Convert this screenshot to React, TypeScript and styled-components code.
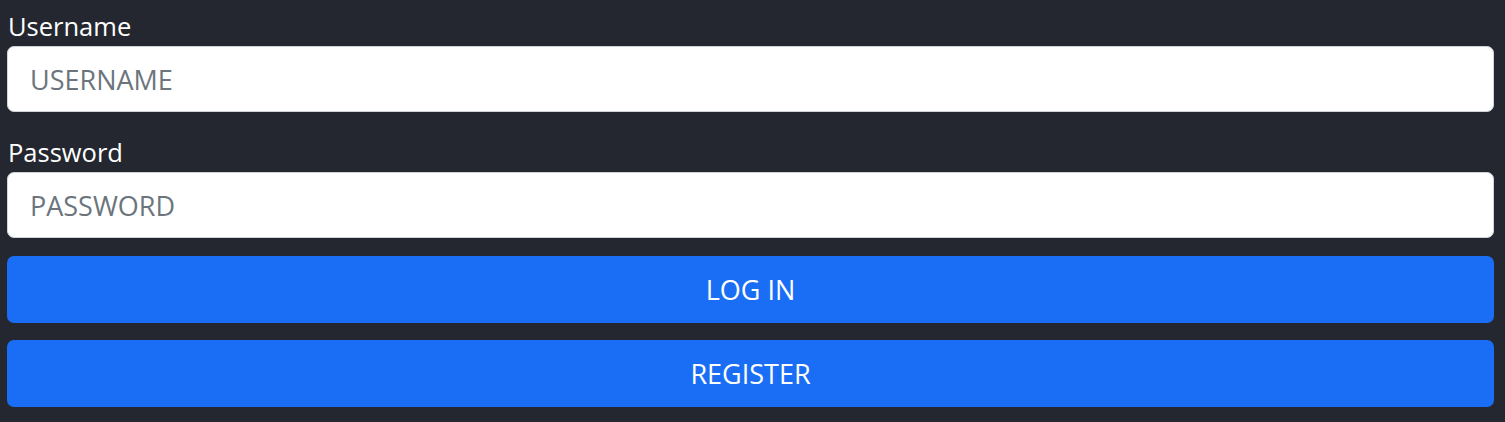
import React from "react";
import styled, { createGlobalStyle } from "styled-components";

const GlobalStyle = createGlobalStyle`
  html, body {
    margin: 0;
    padding: 0;
    background: #24272f;
  }
  body {
    font-family: "Open Sans", "Noto Sans", "Liberation Sans", sans-serif;
  }
  * { box-sizing: border-box; }
`;

const Page = styled.div`
  width: 1505px;
  height: 422px;
  background: #24272f;
  padding: 0 11px 0 7px;
  overflow: hidden;
`;

const Form = styled.form`
  display: flex;
  flex-direction: column;
`;

const Field = styled.div`
  display: flex;
  flex-direction: column;
  margin-bottom: ${(p: { $mb?: number }) => p.$mb ?? 0}px;
`;

const Label = styled.label`
  display: block;
  color: #ffffff;
  font-size: 25.5px;
  line-height: 30px;
  padding: 11px 0 0 1px;
  margin-bottom: 5px;
`;

const Input = styled.input`
  display: block;
  width: 100%;
  height: 66px;
  padding: 0 22px;
  border: 1px solid #ced4da;
  border-radius: 7px;
  background: #ffffff;
  color: #212529;
  font-family: inherit;
  font-size: 27px;
  outline: none;
  &::placeholder {
    color: #6c757d;
    opacity: 1;
  }
`;

const Button = styled.button`
  display: flex;
  align-items: center;
  justify-content: center;
  width: 100%;
  height: 67px;
  border: none;
  border-radius: 7px;
  background: #1a6ef5;
  color: #ffffff;
  font-family: inherit;
  font-size: 27px;
  margin-bottom: ${(p: { $mb?: number }) => p.$mb ?? 0}px;
  cursor: pointer;
`;

export default function App() {
  return (
    <>
      <GlobalStyle />
      <Page>
        <Form onSubmit={(e) => e.preventDefault()}>
          <Field $mb={14}>
            <Label htmlFor="username">Username</Label>
            <Input id="username" type="text" placeholder="USERNAME" />
          </Field>
          <Field $mb={18}>
            <Label htmlFor="password">Password</Label>
            <Input id="password" type="password" placeholder="PASSWORD" />
          </Field>
          <Button type="submit" $mb={17}>LOG IN</Button>
          <Button type="button">REGISTER</Button>
        </Form>
      </Page>
    </>
  );
}
